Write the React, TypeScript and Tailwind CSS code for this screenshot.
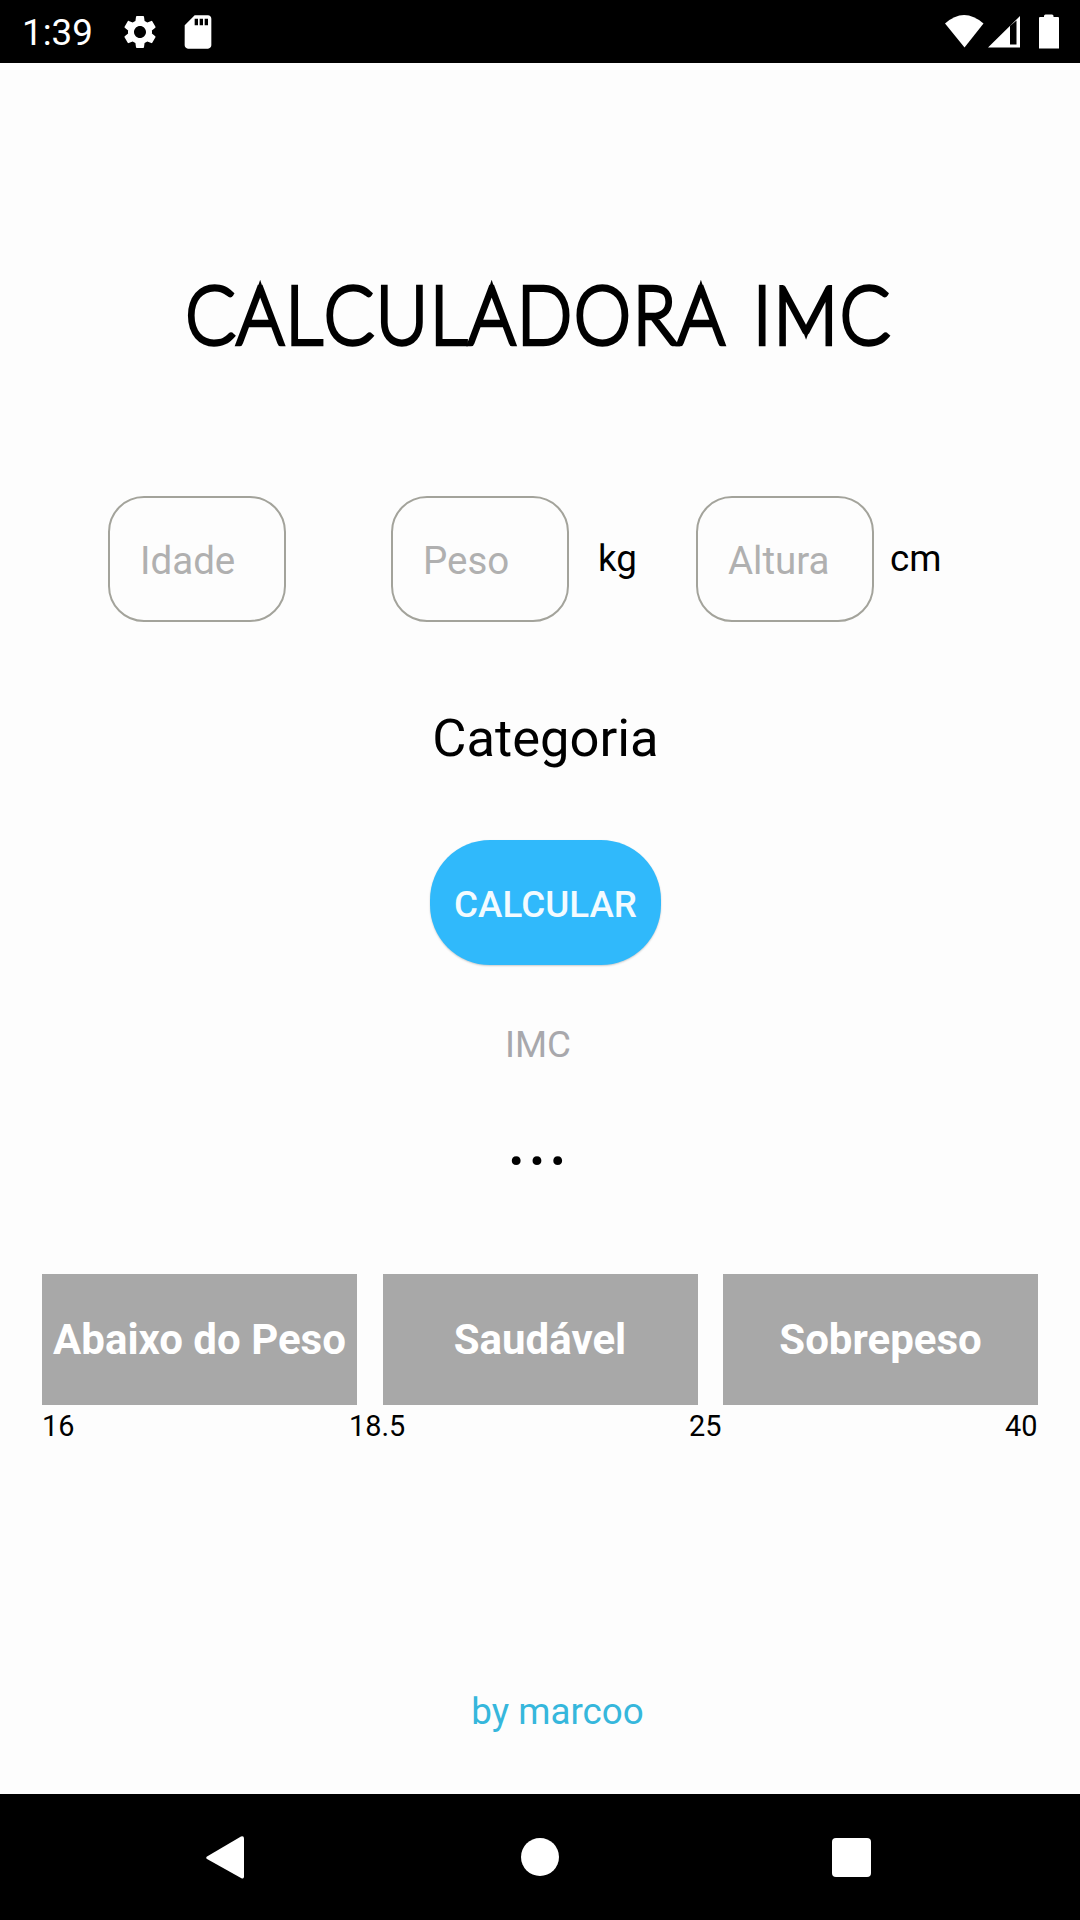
import type { ReactNode } from "react";
import { MdSdCard, MdSettings } from "react-icons/md";

function StatusBar() {
  return (
    <header className="flex h-[63px] shrink-0 items-center justify-between bg-black pl-[22px] pr-[20px] text-white">
      <div className="flex items-center">
        <span className="w-[98px] pt-[4px] text-[36.75px] leading-none">1:39</span>
        <MdSettings className="size-10" />
        <MdSdCard className="ml-[18px] size-10" />
      </div>
      <svg className="h-[36px] w-[116px]" viewBox="0 0 116 36" fill="currentColor">
        <path d="M1 9.5Q20-7.500 39.500 9.500L20.500 33.500Z" />
        <path fillRule="evenodd" d="M44 33.500L76 2V33.500ZM66 12V30.500H72.500V6.500Z" />
        <path d="M95 4Q95 3 96 3H100V2Q100 0.500 101.500 0.500H108Q109.500 0.500 109.500 2V3H114Q115 3 115 4V34.500H95Z" />
      </svg>
    </header>
  );
}

function Field({ label, children }: { label: string; children?: ReactNode }) {
  return (
    <div className="flex items-center">
      <input
        placeholder={label}
        className="h-[126px] w-[178px] rounded-[36px] border-2 border-[#a3a39b] bg-transparent pl-[30px] pt-[3px] text-[38.5px] text-black placeholder:text-[#b0b0b0]"
      />
      {children}
    </div>
  );
}

function Range({ children }: { children: ReactNode }) {
  return (
    <div className="flex h-[131px] w-[315px] items-center justify-center bg-[#a8a8a8] text-[42px] font-bold text-white">
      {children}
    </div>
  );
}

function NavBar() {
  return (
    <nav className="flex h-[126px] shrink-0 items-center justify-between bg-black pl-[206px] pr-[209px] text-white">
      <svg className="h-[43px] w-[38px]" viewBox="0 0 38 43" fill="currentColor">
        <path d="M1 20.500L35 0.500Q38 -0.500 38 2.500V40.500Q38 43.500 35 42L1 23Q-0.500 21.700 1 20.500Z" />
      </svg>
      <div className="relative left-[2px] size-[38px] rounded-full bg-white" />
      <div className="size-[39px] rounded-[4px] bg-white" />
    </nav>
  );
}

export default function App() {
  return (
    <div className="flex h-[1920px] w-[1080px] flex-col overflow-hidden bg-[#fdfdfd] font-[Roboto,sans-serif] text-black">
      <StatusBar />
      <main className="flex flex-1 flex-col">
        <h1 className="ml-[186px] mt-[200px] origin-left scale-x-[0.9] whitespace-nowrap font-[Lato,sans-serif] text-[79px] font-thin leading-[100px] tracking-[3.4px] [-webkit-text-stroke:6.5px_black] [font-kerning:none] [stroke-linejoin:round] [word-spacing:4px]">
          CALCULADORA IMC
        </h1>
        <div className="mt-[133px] flex pl-[108px] text-[36.75px]">
          <Field label="Idade" />
          <div className="ml-[105px]">
            <Field label="Peso">
              <span className="w-[97px] pl-[29px]">kg</span>
            </Field>
          </div>
          <div className="ml-[30px]">
            <Field label="Altura">
              <span className="pl-[16px]">cm</span>
            </Field>
          </div>
        </div>
        <h2 className="mt-[85px] pl-[11px] text-center text-[52.5px] leading-[62px]">Categoria</h2>
        <button className="ml-[430px] mt-[71px] h-[125px] w-[231px] rounded-[60px] bg-[#30b9fb] pt-[4px] text-[36.75px] font-medium text-[#f3fbff] shadow-[0_1px_2px_rgba(0,0,0,0.2)]">
          CALCULAR
        </button>
        <p className="mt-[58px] pr-[4px] text-center text-[36.75px] leading-[44px] text-[#a8a8ac]">IMC</p>
        <p className="mt-[25px] pr-[5px] text-center text-[78.75px] leading-[92px]">...</p>
        <div className="mt-[90px] flex justify-between px-[42px]">
          <Range>Abaixo do Peso</Range>
          <Range>Saudável</Range>
          <Range>Sobrepeso</Range>
        </div>
        <div className="mt-[4px] flex pl-[42px] text-[28.875px] leading-[34px]">
          <span className="w-[307px]">16</span>
          <span className="w-[340px]">18.5</span>
          <span className="w-[316px]">25</span>
          <span>40</span>
        </div>
        <p className="mt-[247px] pl-[35px] text-center text-[36.75px] leading-[44px] text-[#36b7dc]">by marcoo</p>
      </main>
      <NavBar />
    </div>
  );
}
